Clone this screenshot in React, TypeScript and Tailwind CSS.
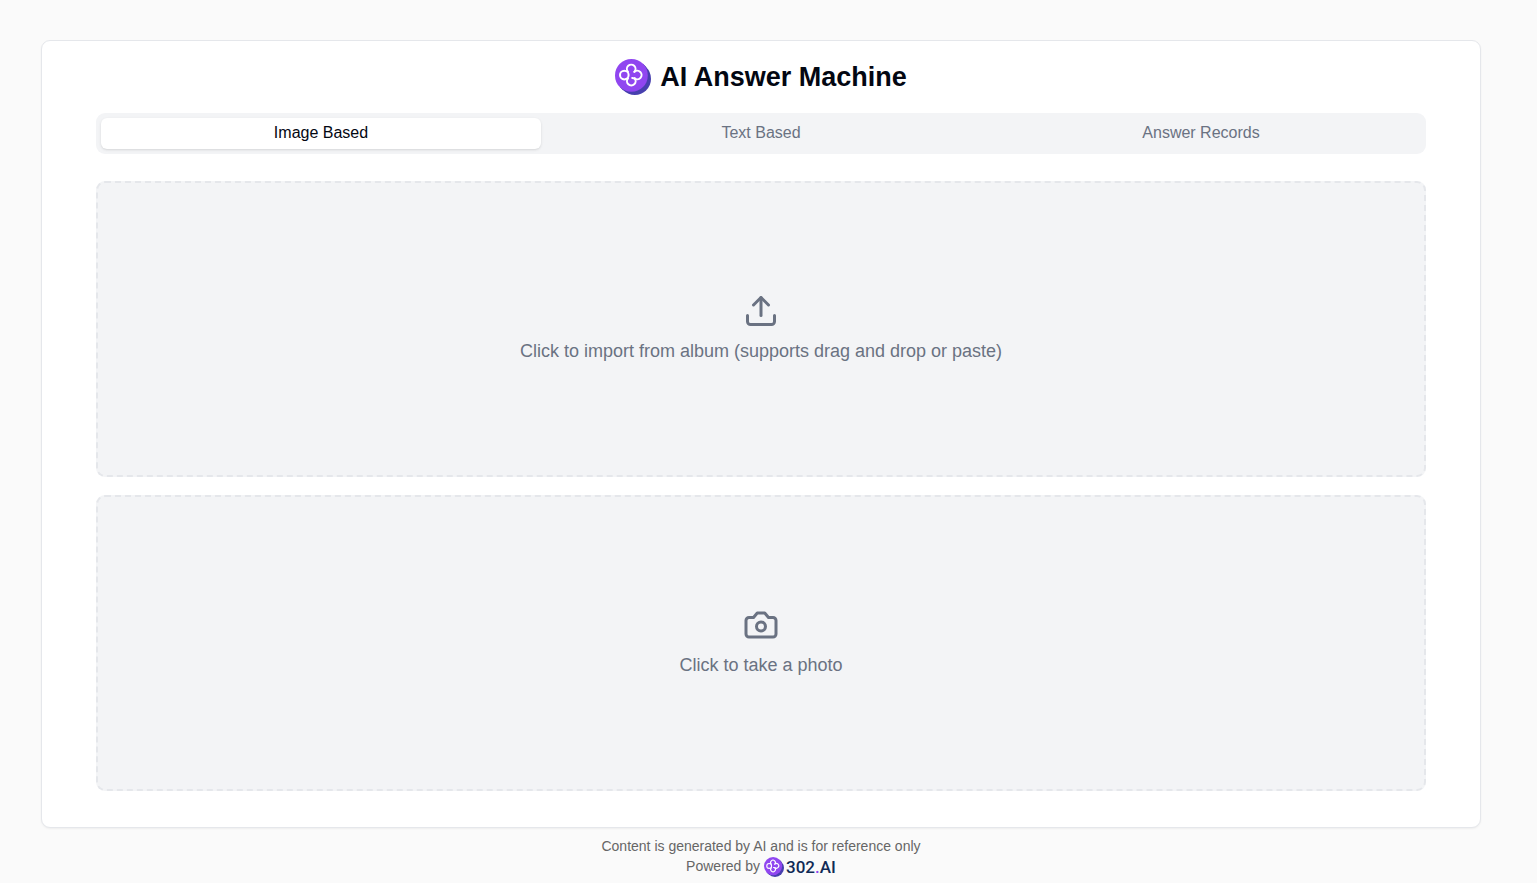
import { useState, type ReactNode } from 'react';

const tabs = ['Image Based', 'Text Based', 'Answer Records'];

function Logo({ className }: { className: string }) {
  return (
    <svg viewBox="0 0 36 36" className={className} aria-hidden="true">
      <circle cx="19.8" cy="19.8" r="16.2" fill="#473fae" />
      <path d="M4.8 28 L28 4.8 L31.2 8 L8 31.2 Z" fill="#473fae" />
      <circle cx="16.4" cy="16.4" r="16.4" fill="#9046f0" />
      <g fill="none" stroke="#fff" strokeWidth="2" strokeLinecap="round">
        <path d="M13 12.8 A4.3 4.3 0 1 1 19.4 12.8" />
        <path d="M19.4 12.8 A4.3 4.3 0 1 1 19.6 19.4" />
        <path d="M19.6 19.4 A4.3 4.3 0 1 1 13 19.4" />
        <path d="M19.6 19.4 L17.2 19" />
        <circle cx="9.3" cy="16.1" r="4.3" />
      </g>
    </svg>
  );
}

function Glyph({ children }: { children: ReactNode }) {
  return (
    <svg
      viewBox="0 0 24 24"
      className="size-9"
      fill="none"
      stroke="currentColor"
      strokeWidth="2"
      strokeLinecap="round"
      strokeLinejoin="round"
      aria-hidden="true"
    >
      {children}
    </svg>
  );
}

function DropZone({ label, children }: { label: string; children: ReactNode }) {
  return (
    <button
      type="button"
      className="flex h-74 w-full cursor-pointer flex-col items-center justify-center gap-2 rounded-[9px] border-2 border-dashed border-gray-200 bg-gray-100 text-lg text-gray-500"
    >
      <Glyph>{children}</Glyph>
      <span>{label}</span>
    </button>
  );
}

export default function App() {
  const [active, setActive] = useState(0);

  return (
    <div className="min-h-screen bg-[#fafafa] pt-10 pr-[15px] font-['Liberation_Sans',Arial,sans-serif] text-gray-950">
      <main className="mx-auto w-full max-w-[1440px] rounded-[9px] border border-gray-200 bg-white px-[54px] pt-[18px] pb-9 shadow-xs">
        <header className="flex h-9 items-center justify-center gap-[9px]">
          <Logo className="size-9" />
          <h1 className="text-[27px] leading-9 font-bold">AI Answer Machine</h1>
        </header>

        <div role="tablist" className="mt-[18px] grid grid-cols-3 rounded-[9px] bg-gray-100 p-[5px]">
          {tabs.map((tab, i) => (
            <button
              key={tab}
              type="button"
              role="tab"
              aria-selected={i === active}
              onClick={() => setActive(i)}
              className={
                i === active
                  ? 'flex h-[31px] items-center justify-center rounded-md bg-white pb-[2px] text-base text-gray-950 shadow-sm'
                  : 'flex h-[31px] items-center justify-center rounded-md pb-[2px] text-base text-gray-500'
              }
            >
              {tab}
            </button>
          ))}
        </div>

        <div className="mt-[27px] flex flex-col gap-[18px]">
          <DropZone label="Click to import from album (supports drag and drop or paste)">
            <path d="M21 15v4a2 2 0 0 1-2 2H5a2 2 0 0 1-2-2v-4" />
            <path d="M17 8l-5-5-5 5" />
            <path d="M12 3v12" />
          </DropZone>
          <DropZone label="Click to take a photo">
            <path d="M14.5 4h-5L7 7H4a2 2 0 0 0-2 2v9a2 2 0 0 0 2 2h16a2 2 0 0 0 2-2V9a2 2 0 0 0-2-2h-3l-2.5-3z" />
            <circle cx="12" cy="13" r="3" />
          </DropZone>
        </div>
      </main>

      <footer className="flex flex-col items-center pt-2 text-sm text-[#666]">
        <p>Content is generated by AI and is for reference only</p>
        <p className="flex items-start gap-1">
          Powered by
          <a href="#" className="flex items-center gap-[2px] pt-px">
            <Logo className="size-5" />
            <span className="font-[Roboto,sans-serif] text-[17px] leading-5 font-medium text-[#102a56]">
              302<span className="text-[#9046f0]">.</span>AI
            </span>
          </a>
        </p>
      </footer>
    </div>
  );
}
